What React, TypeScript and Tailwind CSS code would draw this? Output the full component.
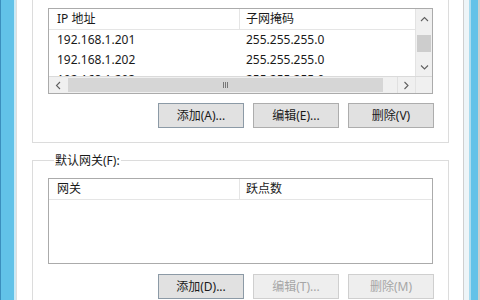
import { ReactNode } from "react"

function Chevron({ dir }: { dir: "up" | "down" | "left" | "right" }) {
  const d = {
    up: "M1 5 L4.5 1.5 L8 5",
    down: "M1 1.5 L4.5 5 L8 1.5",
    left: "M5 1 L1.5 4.5 L5 8",
    right: "M1.5 1 L5 4.5 L1.5 8",
  }[dir]
  const horiz = dir === "up" || dir === "down"
  return (
    <svg width={horiz ? 9 : 7} height={horiz ? 7 : 9} viewBox={horiz ? "0 0 9 7" : "0 0 7 9"}>
      <path d={d} fill="none" stroke="#606060" strokeWidth="1.1" />
    </svg>
  )
}

function WinButton({ children, disabled, focused }: { children: ReactNode; disabled?: boolean; focused?: boolean }) {
  return (
    <div
      className={
        "w-[86px] h-[25px] flex items-center justify-center border " +
        (disabled
          ? "border-[#cfcfcf] bg-[#eeeeee] text-[#a6a6a6]"
          : focused
          ? "border-[#8c9aa6] bg-[#e1e1e1] text-[#1a1a1a]"
          : "border-[#adadad] bg-[#e1e1e1] text-[#1a1a1a]")
      }
    >
      {children}
    </div>
  )
}

function HeaderRow({ a, b }: { a: string; b: string }) {
  return (
    <div className="flex h-[21px] border-b border-[#e5e5e5] bg-white">
      <div className="w-[191px] pl-[8px] flex items-center border-r border-[#e5e5e5]">{a}</div>
      <div className="flex-1 pl-[6px] flex items-center">{b}</div>
    </div>
  )
}

export default function App() {
  return (
    <div className="w-[480px] h-[300px] overflow-hidden flex bg-white text-[12px] text-[#1a1a1a] font-['Noto_Sans','Noto_Sans_CJK_SC',sans-serif]">
      {/* window frame left */}
      <div className="w-[1px] bg-[#3b8ebd]" />
      <div className="w-[13px] bg-[#62c2e8]" />
      <div className="w-[2px] bg-[#cbe9f5]" />
      <div className="w-[1px] bg-[#dedede]" />

      {/* dialog content */}
      <div className="w-[446px] bg-white pl-[15px] pr-[14px]">
        {/* IP addresses group (top cut off) */}
        <div className="-mt-[12px] pt-[20px] pb-[14px] px-[15px] border-x border-b border-[#dcdcdc]">
          <div className="h-[86px] border border-[#ababab] flex flex-col">
            <div className="flex h-[67px]">
              <div className="flex-1 overflow-hidden">
                <HeaderRow a="IP 地址" b="子网掩码" />
                {[
                  ["192.168.1.201", "255.255.255.0"],
                  ["192.168.1.202", "255.255.255.0"],
                  ["192.168.1.203", "255.255.255.0"],
                ].map(([ip, mask]) => (
                  <div key={ip} className="flex h-[20px] items-center">
                    <div className="w-[191px] pl-[8px]">{ip}</div>
                    <div className="pl-[6px]">{mask}</div>
                  </div>
                ))}
              </div>
              {/* vertical scrollbar */}
              <div className="w-[17px] border-l border-[#e3e3e3] bg-[#f0f0f0] flex flex-col">
                <div className="h-[20px] flex items-center justify-center">
                  <Chevron dir="up" />
                </div>
                <div className="h-[6px]" />
                <div className="h-[17px] mx-[1px] bg-[#cdcdcd]" />
                <div className="flex-1" />
                <div className="h-[18px] flex items-center justify-center">
                  <Chevron dir="down" />
                </div>
              </div>
            </div>
            {/* horizontal scrollbar */}
            <div className="flex h-[17px] border-t border-[#dadada]">
              <div className="flex-1 flex bg-[#f0f0f0]">
                <div className="w-[19px] flex items-center justify-center">
                  <Chevron dir="left" />
                </div>
                <div className="w-[315px] my-[1px] bg-[#d6d6d6] flex items-center justify-center">
                  <div className="flex gap-[1px]">
                    <div className="w-[1px] h-[6px] bg-[#777]" />
                    <div className="w-[1px] h-[6px] bg-[#777]" />
                    <div className="w-[1px] h-[6px] bg-[#777]" />
                  </div>
                </div>
                <div className="flex-1" />
                <div className="w-[18px] flex items-center justify-center border-l border-[#e0e0e0]">
                  <Chevron dir="right" />
                </div>
              </div>
              <div className="w-[17px] bg-[#f0f0f0] border-l border-[#e3e3e3]" />
            </div>
          </div>
          <div className="mt-[9px] flex justify-end gap-[9px] -mr-[1px]">
            <WinButton focused>添加(A)...</WinButton>
            <WinButton>编辑(E)...</WinButton>
            <WinButton>删除(V)</WinButton>
          </div>
        </div>

        {/* default gateway group */}
        <fieldset className="mt-[9px] px-[15px] pb-[14px] border border-[#dcdcdc]">
          <legend className="ml-[6px] px-[1px] leading-[17px]">默认网关(F):</legend>
          <div className="mt-[9px] h-[86px] border border-[#ababab] bg-white">
            <HeaderRow a="网关" b="跃点数" />
          </div>
          <div className="mt-[10px] flex justify-end gap-[9px] -mr-[1px]">
            <WinButton focused>添加(D)...</WinButton>
            <WinButton disabled>编辑(T)...</WinButton>
            <WinButton disabled>删除(M)</WinButton>
          </div>
        </fieldset>
      </div>

      {/* window frame right */}
      <div className="w-[1px] bg-[#cfcfcf]" />
      <div className="w-[5px] bg-[#eef5f8]" />
      <div className="w-[2px] bg-[#a9dcef]" />
      <div className="w-[7px] bg-[#62c2e8]" />
      <div className="flex-1 bg-[#cfcfcf]" />
    </div>
  )
}
